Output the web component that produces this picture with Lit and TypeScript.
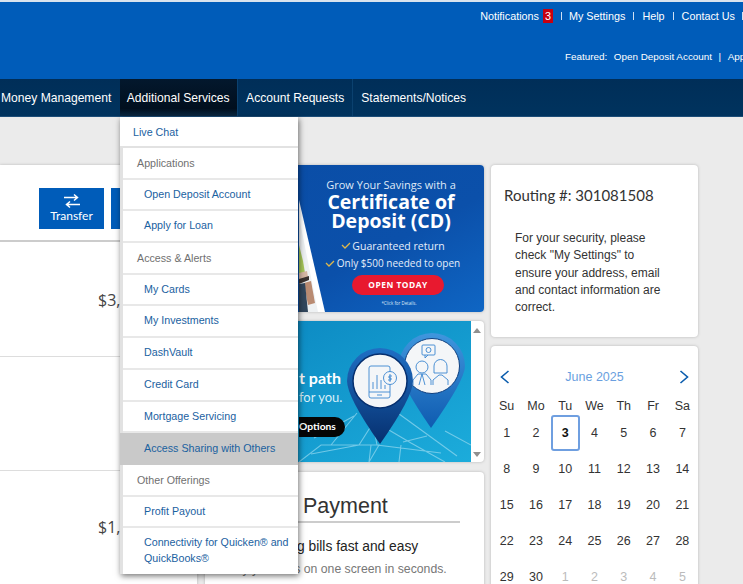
import { LitElement, html, css, svg } from "lit";
import { customElement } from "lit/decorators.js";

const weeks = [
  [1, 2, 3, 4, 5, 6, 7],
  [8, 9, 10, 11, 12, 13, 14],
  [15, 16, 17, 18, 19, 20, 21],
  [22, 23, 24, 25, 26, 27, 28],
  [29, 30, 1, 2, 3, 4, 5],
];

const banner1 = svg`
  <defs>
    <linearGradient id="b1" x1="0" y1="0" x2="1" y2="1">
      <stop offset="0" stop-color="#0a4da6"/><stop offset=".6" stop-color="#0b50aa"/><stop offset="1" stop-color="#0f66c4"/>
    </linearGradient>
  </defs>
  <rect width="279" height="147" fill="url(#b1)"/>
  <polygon points="94,35 94,147 120,147" fill="#fff"/>
  <polygon points="94,52 94,147 113,147" fill="#eef1f3"/>
  <polygon points="94,80 98,96 100,108 94,108" fill="#a6c65a"/>
  <polygon points="94,108 102,106 103,112 94,116" fill="#d6b7a4"/>
  <polygon points="94,114 104,111 104,115 94,119" fill="#3a3230"/>
  <polygon points="99,118 106,116 110,138 103,140" fill="#b98b72"/>
  <polygon points="94,119 100,118 103,147 94,147" fill="#31465c"/>
  <g text-anchor="middle" fill="#fff" font-family="'Open Sans',sans-serif">
    <text x="186" y="24" font-size="11" fill="#dfe9f7">Grow Your Savings with a</text>
    <text x="186" y="44" font-size="19.500" font-weight="700">Certificate of</text>
    <text x="186" y="63" font-size="19.500" font-weight="700">Deposit (CD)</text>
    <text x="193.500" y="85" font-size="10.500" fill="#e6eefa">Guaranteed return</text>
    <text x="193.500" y="102" font-size="10" fill="#e6eefa">Only $500 needed to open</text>
  </g>
  <path d="M137 80l3 3 5-5M121 98l3 3 5-5" fill="none" stroke="#e0b84a" stroke-width="1.300"/>
  <rect x="147" y="110" width="92" height="20" rx="10" fill="#e8192f"/>
  <text x="193" y="123" text-anchor="middle" font-family="'Open Sans',sans-serif" font-size="8.400" font-weight="700" letter-spacing=".5" fill="#fff">OPEN TODAY</text>
  <text x="194" y="140" text-anchor="middle" font-family="'Open Sans',sans-serif" font-size="4.400" fill="#dfe9f7">*Click for Details.</text>
`;

const banner2 = svg`
  <defs>
    <linearGradient id="b2" x1="0" y1="0" x2="1" y2="1">
      <stop offset="0" stop-color="#0a85bf"/><stop offset="1" stop-color="#1cacdb"/>
    </linearGradient>
    <linearGradient id="p1" x1="0" y1="0" x2="0" y2="1">
      <stop offset="0" stop-color="#1f6fc4"/><stop offset="1" stop-color="#062f6e"/>
    </linearGradient>
    <linearGradient id="p2" x1="0" y1="0" x2="0" y2="1">
      <stop offset="0" stop-color="#3f96dd"/><stop offset="1" stop-color="#0f5bb0"/>
    </linearGradient>
  </defs>
  <rect width="266" height="141" fill="url(#b2)"/>
  <path d="M94 141l22-17h58l-10 17M106 133l48-9 14-22 4 22 64 8M126 124l26-32M172 102l34 20 34 19M190 90l62 45M222 115l-24 6M240 110l26 14M109 117l40-22M166 124l-2 17M196 124l-2 17" fill="none" stroke="#8fd6ee" stroke-width="1.100" opacity=".75"/>
  <path d="M94 96h36a10 10 0 0 1 0 20H94z" fill="#050505"/>
  <text x="94" y="109" font-family="Lato,sans-serif" font-size="10.300" font-weight="700" fill="#fff">Options</text>
  <text x="94" y="63" font-family="Lato,sans-serif" font-size="16" font-weight="700" fill="#fff">t path</text>
  <text x="94" y="81" font-family="Lato,sans-serif" font-size="13" fill="#d6eef8">for you.</text>
  <path d="M194 45a33 33 0 1 1 66 0q0 14-34 62q-32-46-32-62z" fill="url(#p2)"/>
  <circle cx="227" cy="45" r="27.500" fill="#f4f6f8" stroke="#0e3f80" stroke-width="1"/>
  <g fill="none" stroke="#3a86d0" stroke-width=".9">
    <rect x="217" y="24" width="13" height="10" rx="1"/><circle cx="223.500" cy="29" r="2.500"/><path d="M220 34v3l3-3"/>
    <circle cx="217" cy="46" r="6"/><path d="M208 64v-5l5-6h8l5 6v5M217 53l-3 11M217 53l3 11"/>
    <path d="M229 52v-7a6.500 6.500 0 0 1 13 0v7zM228 64v-5l6-5h3l6 5v5"/>
  </g>
  <path d="M142 60a33 33 0 1 1 66 0q0 16-33 63q-33-47-33-63z" fill="url(#p1)"/>
  <circle cx="175" cy="60" r="27" fill="#f4f6f8" stroke="#062f6e" stroke-width="1.500"/>
  <g fill="none" stroke="#3a86d0" stroke-width=".9">
    <rect x="164" y="45" width="21" height="32" rx="2"/><path d="M164 71h21M172 74h5M168 68v-7M172 68v-14M176 68v-9M180 68v-4"/>
    <circle cx="185" cy="57" r="6.500" fill="#f4f6f8"/><path d="M187 55h-3v2h2v2h-3M185 53v8"/>
  </g>
`;

const arrows = svg`<path d="M1 4.500h13M11 1.500l3.500 3-3.500 3" /><path d="M17 11.500H4M7 8.500l-3.500 3 3.500 3"/>`;

@customElement("app-root")
export class AppRoot extends LitElement {
  static styles = css`
    :host { display: block; position: relative; width: 743px; height: 584px; overflow: hidden; background: #ebebeb; font-family: "Liberation Sans", Arial, sans-serif; }
    a { color: inherit; text-decoration: none; }
    .strip { height: 2px; background: #d9e3ee; }
    .head { height: 77px; background: #005cb9; color: #fff; font-size: 10.800px; display: flex; flex-direction: column; overflow: hidden; }
    .links { height: 28px; display: flex; align-items: center; justify-content: flex-end; white-space: nowrap; }
    .badge { background: #c8000f; padding: 0 2px; height: 14px; line-height: 14px; margin-left: 4px; }
    .bar { width: 1px; height: 8px; background: #cfe0f3; margin: 0 8px; }
    .bar.first { margin-right: 7px; }
    .bar.last { margin: 0 0 0 7px; }
    .featured { margin-top: 21px; padding-left: 565px; font-size: 9.900px; white-space: nowrap; display: flex; gap: 6.500px; align-items: center; }
    .nav { height: 38px; background: linear-gradient(#002e58, #00335e); border-bottom: 1px solid #1c4d78; box-sizing: border-box; display: flex; color: #fff; font-size: 12.100px; white-space: nowrap; }
    .nav a { display: flex; align-items: center; padding: 0 8px; border-right: 1px solid #0b416f; }
    .nav a:first-child { padding: 0 8.500px 0 1px; border-right: none; }
    .nav a.active { background: linear-gradient(#03182d, #010f1e 80%, #0a2843); padding: 0 7.500px 0 7px; }
    .nav a:last-child { border-right: none; }

    .main { display: grid; grid-template-columns: 197px 279px 207px; column-gap: 7.500px; padding-top: 48px; align-items: start; }
    .card { background: #fff; border-radius: 4px; box-shadow: 0 0 3px #b5b5b5; }
    .left { border-radius: 0 4px 4px 0; height: 430px; }
    .tools { border-bottom: 2px solid #ccc; padding: 23px 0 0 39px; height: 52px; display: flex; gap: 7px; }
    .tool { width: 65px; height: 41px; background: #005cb9; color: #fff; font-family: Lato, sans-serif; font-size: 12px; line-height: 14px; display: flex; flex-direction: column; align-items: center; justify-content: center; gap: 0; padding-bottom: 2px; box-sizing: border-box; }
    .tool svg { width: 18px; height: 16px; fill: none; stroke: #fff; stroke-width: 1.500; }
    .acct { height: 114.500px; border-bottom: 1px solid #ddd; padding: 47px 0 0 98px; box-sizing: border-box; font-family: "Open Sans", sans-serif; font-size: 16px; color: #444; line-height: 22px; }
    .acct.low { padding-top: 45px; }

    .mid, .right { display: flex; flex-direction: column; gap: 9px; }
    .banner { height: 147px; overflow: hidden; }
    .banner svg { display: block; width: 279px; height: 147px; }
    .banner2 { height: 141px; display: flex; overflow: hidden; }
    .banner2 svg { display: block; width: 266px; height: 141px; }
    .scroll { width: 13px; display: flex; flex-direction: column; justify-content: space-between; align-items: center; padding: 7px 0 5px; box-sizing: border-box; }
    .up { width: 0; height: 0; border: 4px solid transparent; border-top: none; border-bottom: 5px solid #8f8f8f; }
    .down { width: 0; height: 0; border: 4px solid transparent; border-bottom: none; border-top: 5px solid #8f8f8f; }
    .pay { height: 140px; padding: 21px 24px 0 22px; box-sizing: border-box; margin-top: 1px; }
    .pay h2 { margin: 0; padding-bottom: 1px; border-bottom: 2px solid #ccc; font-weight: 400; font-size: 21.500px; line-height: 27px; color: #333; }
    .pay .lead { margin-top: 15px; font-size: 13.800px; line-height: 18px; color: #222; white-space: nowrap; }
    .pay .sub { margin: 5px 0 0 1px; font-size: 12.250px; line-height: 17px; color: #777; white-space: nowrap; }

    .route { height: 172px; padding: 20px 12px 0 13px; box-sizing: border-box; }
    .route h3 { margin: 0; font-family: Lato, sans-serif; font-weight: 400; font-size: 15px; line-height: 20px; color: #333; }
    .route p { margin: 25px 0 0 11px; width: 152px; font-size: 12px; line-height: 17.300px; color: #333; }
    .cal { height: 260px; padding: 22px 1px 0; box-sizing: border-box; }
    .calhead { display: flex; align-items: center; justify-content: space-between; padding: 0 7px; height: 18px; }
    .calhead svg { width: 12px; height: 16px; fill: none; stroke: #0a5cad; stroke-width: 1.600; }
    .month { color: #6a9fe0; font-size: 12.500px; }
    .grid { display: grid; grid-template-columns: repeat(7, 1fr); font-size: 12.500px; color: #333; text-align: center; }
    .dow { height: 18px; margin-top: 11px; line-height: 18px; }
    .day { height: 36px; line-height: 36px; box-sizing: border-box; }
    .day.sel { border: 2px solid #6f9fe0; border-radius: 3px; line-height: 32px; font-weight: 700; color: #111; }
    .day.off { color: #bbb; }

    .menu { position: absolute; left: 120px; top: 117px; width: 178px; background: #fff; box-shadow: 1px 2px 6px rgba(0, 0, 0, .55); font-size: 10.700px; color: #1a619f; }
    .menu a, .menu span { display: block; box-sizing: border-box; }
    .top { line-height: 30px; padding-left: 13px; border-bottom: 2px solid #e2e2e2; height: 31px; }
    .sec { border-left: 3px solid #e2e2e2; }
    .sec > * { height: 31.700px; line-height: 29px; border-bottom: 2px solid #e8e8e8; }
    .sec .label { padding-left: 14px; color: #707070; line-height: 30px; }
    .sec a { padding-left: 21px; }
    .sec a.hover { background: #c9c9c9; border-bottom-color: #c9c9c9; margin-left: -3px; padding-left: 24px; line-height: 30px; }
    .sec a.two { height: auto; line-height: 15.500px; padding: 7px 4px 8px 21px; border-bottom: none; }
  `;

  render() {
    const isOff = (w: number, d: number) => w === 4 && d < 10;
    return html`
      <div class="strip"></div>
      <header class="head">
        <div class="links">
          <a>Notifications</a><span class="badge">3</span><i class="bar first"></i>
          <a>My Settings</a><i class="bar"></i><a>Help</a><i class="bar"></i><a>Contact Us</a><i class="bar last"></i>
        </div>
        <div class="featured"><span>Featured:</span><a>Open Deposit Account</a><span>|</span><a>Apply for Loan</a></div>
      </header>
      <nav class="nav">
        <a>Money Management</a><a class="active">Additional Services</a><a>Account Requests</a><a>Statements/Notices</a>
      </nav>
      <main class="main">
        <section class="card left">
          <div class="tools">
            <div class="tool"><svg viewBox="0 0 18 16">${arrows}</svg>Transfer</div>
            <div class="tool"><svg viewBox="0 0 18 16">${arrows}</svg>Pay</div>
          </div>
          <div class="acct">$3,482.16</div>
          <div class="acct"></div>
          <div class="acct low">$1,206.40</div>
        </section>
        <section class="mid">
          <div class="card banner"><svg viewBox="0 0 279 147">${banner1}</svg></div>
          <div class="card banner2">
            <svg viewBox="0 0 266 141">${banner2}</svg>
            <div class="scroll"><i class="up"></i><i class="down"></i></div>
          </div>
          <div class="card pay">
            <h2>Make a Payment</h2>
            <div class="lead">Make paying bills fast and easy</div>
            <div class="sub">Pay your bills on one screen in seconds.</div>
          </div>
        </section>
        <section class="right">
          <div class="card route">
            <h3>Routing #: 301081508</h3>
            <p>For your security, please check "My Settings" to ensure your address, email and contact information are correct.</p>
          </div>
          <div class="card cal">
            <div class="calhead">
              <svg viewBox="0 0 12 16"><path d="M9.500 2l-7 6 7 6"/></svg>
              <span class="month">June 2025</span>
              <svg viewBox="0 0 12 16"><path d="M2.500 2l7 6-7 6"/></svg>
            </div>
            <div class="grid">
              ${["Su", "Mo", "Tu", "We", "Th", "Fr", "Sa"].map((d) => html`<div class="dow">${d}</div>`)}
              ${weeks.map((w, wi) =>
                w.map((d) => html`<div class="day ${d === 3 && wi === 0 ? "sel" : ""} ${isOff(wi, d) ? "off" : ""}">${d}</div>`)
              )}
            </div>
          </div>
        </section>
      </main>
      <div class="menu">
        <a class="top">Live Chat</a>
        <div class="sec">
          <span class="label">Applications</span>
          <a>Open Deposit Account</a>
          <a>Apply for Loan</a>
          <span class="label">Access &amp; Alerts</span>
          <a>My Cards</a>
          <a>My Investments</a>
          <a>DashVault</a>
          <a>Credit Card</a>
          <a>Mortgage Servicing</a>
          <a class="hover">Access Sharing with Others</a>
          <span class="label">Other Offerings</span>
          <a>Profit Payout</a>
          <a class="two">Connectivity for Quicken® and QuickBooks®</a>
        </div>
      </div>
    `;
  }
}
